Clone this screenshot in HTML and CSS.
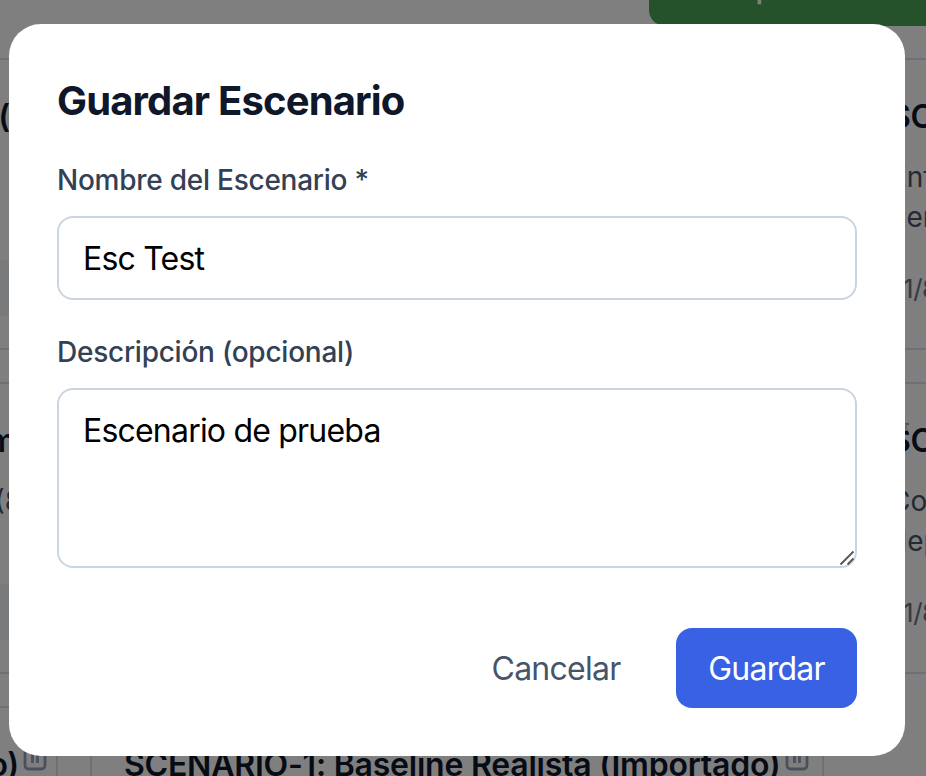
FILE: index.html
```html
<!DOCTYPE html>
<html lang="es">
<head>
<meta charset="utf-8">
<title>Guardar Escenario</title>
<link rel="stylesheet" href="styles.css">
</head>
<body>
<div class="page">
  <header class="toolbar"><button class="compare">Comparar</button></header>
  <main class="cards">
    <article class="card edge"><h3 class="t1">(</h3><p></p><footer><span class="band"></span></footer></article>
    <article class="card"></article>
    <article class="card"><h3>SC</h3><p>Enf<br>ner</p><footer>11/8</footer></article>
    <article class="card edge"><h3 class="t2">m</h3><p class="d2">(8</p><footer><span class="band"></span></footer></article>
    <article class="card"></article>
    <article class="card"><span class="mark"></span><h3>SC</h3><p>Co<br>dep</p><footer>11/8</footer></article>
    <article class="card edge"><h3 class="t3">(Importado)</h3><svg class="trash" viewBox="0 0 24 32"><path d="M2 4V25q0 4 4 4H18q4 0 4-4V4M9.500 10V23M14.500 10V23"/></svg></article>
    <article class="card"><h3 class="mid">SCENARIO-1: Baseline Realista (Importado)</h3><svg class="trash shifted" viewBox="0 0 24 32"><path d="M2 4V25q0 4 4 4H18q4 0 4-4V4M9.500 10V23M14.500 10V23"/></svg></article>
  </main>
</div>
<div class="overlay">
  <form class="modal">
    <h2>Guardar Escenario</h2>
    <label for="name">Nombre del Escenario *</label>
    <input id="name" type="text" value="Esc Test">
    <label for="desc">Descripción (opcional)</label>
    <div class="area">
      <textarea id="desc">Escenario de prueba</textarea>
      <svg class="grip" viewBox="0 0 16 16"><path d="M1.500 14.500L14.500 1.500M8.500 14.500L14.500 8.500"/></svg>
    </div>
    <div class="actions">
      <button type="button" class="cancel">Cancelar</button>
      <button type="button" class="save">Guardar</button>
    </div>
  </form>
</div>
</body>
</html>
```
FILE: styles.css
```css
* { box-sizing: border-box; }
body { margin: 0; width: 926px; height: 776px; overflow: hidden; background: #fff; font-family: Inter, "Liberation Sans", sans-serif; }
h2, h3, p { margin: 0; }
button, input, textarea { font-family: inherit; }
.page { height: 776px; overflow: hidden; }
.toolbar { height: 26px; display: flex; align-items: flex-end; padding-left: 649px; }
.compare { flex: none; height: 80px; width: 400px; padding: 0 35px; border: 0; border-radius: 16px; background: #4ca456; color: #fff; font-size: 32px; font-weight: 500; text-align: left; white-space: nowrap; }
.cards { display: grid; grid-template-columns: repeat(3, 734px); grid-auto-rows: 292px; gap: 32px; margin: 32px 0 0 -676px; }
.card { position: relative; display: grid; grid-template-columns: 1fr auto; grid-template-rows: 50px 95px 56px; align-content: start; padding: 32px; border: 2px solid #dbe3ec; border-radius: 16px; }
.card h3 { font-size: 32px; line-height: 50px; font-weight: 600; letter-spacing: -.22px; color: #0f172a; white-space: nowrap; }
.card p { grid-column: 1 / -1; margin-top: 15px; height: 80px; font-size: 28px; line-height: 40px; color: #475569; }
.card footer { grid-column: 1 / -1; height: 56px; margin-top: 23px; display: flex; align-items: center; font-size: 26px; letter-spacing: -.5px; color: #64748b; }
.card:not(.edge) footer { padding-left: 3px; }
.card.edge { text-align: right; }
.card.edge footer { justify-content: flex-end; }
.card .t1 { padding-right: 14px; }
.card .t2 { padding-right: 8px; }
.card .d2 { padding-right: 2px; }
.card .t3 { padding-right: 4px; }
.band { width: 120px; height: 56px; background: #f1f5f9; }
.mark { position: absolute; left: 46px; top: 39px; width: 5px; height: 8px; border-top: 2px solid #94a3b8; border-left: 3px solid #cbd5e1; }
.trash { width: 24px; height: 32px; margin-right: -23px; fill: none; stroke: #94a3b8; stroke-width: 2.8; }
.trash.shifted { margin-right: -19px; }
.overlay { position: fixed; inset: 0; display: flex; align-items: flex-start; padding: 24px 21px 0 9px; background: rgba(0, 0, 0, .5); }
.modal { width: 896px; height: 732px; padding: 48px; border-radius: 32px; background: #fff; display: flex; flex-direction: column; }
.modal h2 { margin-bottom: 30px; font-size: 40px; line-height: 58px; font-weight: 700; letter-spacing: -.84px; color: #0f172a; }
label { margin-bottom: 16px; font-size: 28px; line-height: 40px; font-weight: 500; letter-spacing: -.25px; color: #334155; }
input, textarea { display: block; width: 100%; margin: 0; border: 2px solid #cbd5e1; border-radius: 16px; padding: 16px 24px; font-size: 32px; line-height: 48px; letter-spacing: -.8px; color: #000; background: #fff; outline: 0; }
input { height: 84px; margin-bottom: 32px; }
textarea { height: 180px; padding-top: 17px; resize: none; overflow: hidden; }
.area { position: relative; margin-bottom: 60px; }
.grip { position: absolute; right: 2px; bottom: 2px; width: 16px; height: 16px; fill: none; stroke: #555; stroke-width: 1.8; }
.actions { display: flex; justify-content: flex-end; gap: 24px; }
.actions button { height: 80px; border: 0; border-radius: 16px; padding: 0; font-size: 32px; letter-spacing: -.75px; white-space: nowrap; }
.cancel { width: 192px; background: none; color: #475569; }
.save { width: 181px; background: #3862e3; color: #fff; }
```
